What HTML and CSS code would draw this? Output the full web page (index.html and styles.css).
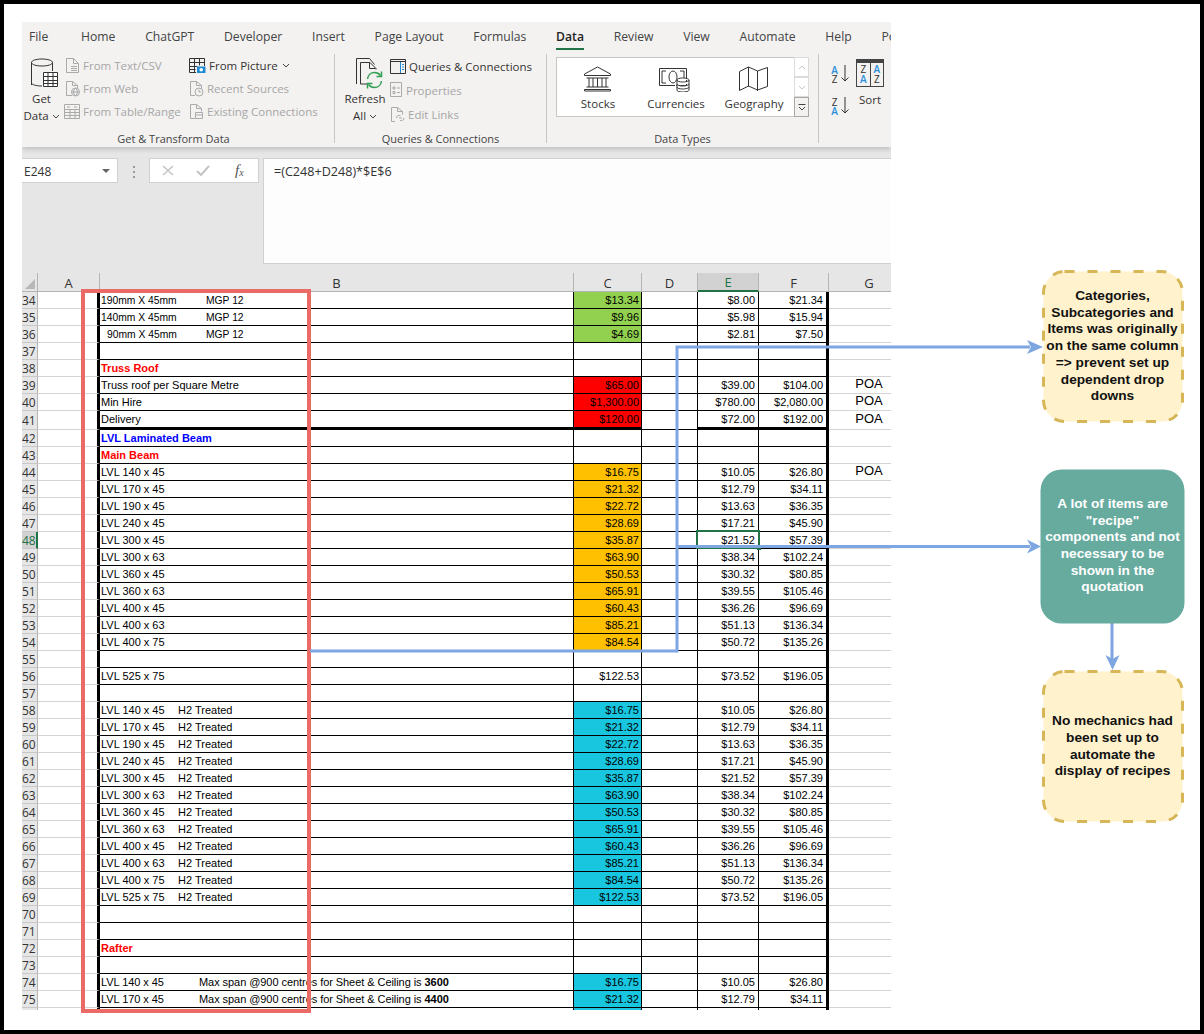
FILE: index.html
```html
<!DOCTYPE html>
<html>
<head>
    <title>Price list review</title>
    <link rel="stylesheet" href="styles.css">
</head>
<body>
<div class="frame">
<div class="excel">
    <div class="ribbon">
        <div class="tabs">
            <span>File</span><span>Home</span><span>ChatGPT</span><span>Developer</span><span>Insert</span><span>Page Layout</span><span>Formulas</span><span class="active">Data</span><span>Review</span><span>View</span><span>Automate</span><span>Help</span><span>Power Pivot</span>
        </div>
        <div class="groups">
            <!-- Get & Transform -->
            <div class="group g1">
                <div class="group-body">
                    <div class="big">
                        <svg width="30" height="32" viewBox="0 0 30 32" fill="none" stroke="#333" stroke-width="1"><path d="M1.5 28V5.5C1.5 3.5 6 2 12 2s10.500 1.500 10.500 3.500V14M1.500 5.500C1.500 7.500 6 9 12 9s10.500-1.500 10.500-3.500M1.500 26c0 1.500 4 3 10.500 3"/><path d="M13.500 15.500h14v14h-14zM13.500 19.500h14M13.500 23.500h14M13.500 26.500h14M18 15.500v14M23 15.500v14" fill="#fff"/></svg>
                        <span class="big-label">Get</span>
                        <span class="big-label">Data <svg class="chev" width="8" height="5" viewBox="0 0 8 5"><path d="M1 1l3 3 3-3" fill="none" stroke="#444"/></svg></span>
                    </div>
                    <div class="col col-a">
                        <div class="item off"><svg width="15" height="17" viewBox="0 0 15 17" fill="none" stroke="#aaa"><path d="M1.500 1.500h7l5 5v9h-12zM8.500 1.500v5h5M6 9.500h6M6 11.500h6M6 13.500h6"/></svg>From Text/CSV</div>
                        <div class="item off"><svg width="15" height="17" viewBox="0 0 15 17" fill="none" stroke="#aaa"><path d="M7 15.500H1.500v-14h6l5 4v3M7.500 1.500v4h5"/><circle cx="10.500" cy="12" r="4"/><path d="M6.500 12h8M10.500 8c-2.500 2.500-2.500 5.500 0 8M10.500 8c2.500 2.500 2.500 5.500 0 8"/></svg>From Web</div>
                        <div class="item off item-wide"><svg width="16" height="15" viewBox="0 0 16 15" fill="none" stroke="#aaa"><path d="M.5.500h15v14H.500zM.5 5.500h15M.5 8.500h15M.5 11.500h15M6 5.500v9M11 5.500v9M3 3h3M10 3h3"/></svg>From Table/Range</div>
                    </div>
                    <div class="col col-b">
                        <div class="item"><svg width="17" height="16" viewBox="0 0 17 16" fill="none" stroke="#333"><path d="M7 14.500H.5V.5h15V8M.5 4.500h15M.5 8.500h8M.5 11.500h6M5.500.5v14M10.500.5v7"/><rect x="8" y="8.500" width="8.500" height="6.500" fill="#1f8ad2" stroke="none"/><circle cx="12.200" cy="11.700" r="1.800" fill="#fff" stroke="none"/></svg>From Picture <svg class="chev" width="8" height="5" viewBox="0 0 8 5"><path d="M1 1l3 3 3-3" fill="none" stroke="#444"/></svg></div>
                        <div class="item off"><svg width="15" height="17" viewBox="0 0 15 17" fill="none" stroke="#aaa"><path d="M6 15.500H1.500v-14h6l5 4v3M7.500 1.500v4h5"/><circle cx="10" cy="12" r="4"/><path d="M10 9.500V12h2"/></svg>Recent Sources</div>
                        <div class="item off"><svg width="15" height="17" viewBox="0 0 15 17" fill="none" stroke="#aaa"><path d="M6 15.500H1.500v-14h6l5 4v3M7.500 1.500v4h5"/><path d="M6.500 9.500h7v6h-7zM6.500 12h7"/></svg>Existing Connections</div>
                    </div>
                </div>
                <div class="group-label shift">Get &amp; Transform Data</div>
            </div>
            <!-- Queries & Connections -->
            <div class="group g2">
                <div class="group-body">
                    <div class="big big-refresh">
                        <svg width="30" height="32" viewBox="0 0 30 32" fill="none"><path d="M3.500 27V1.500h13l5 6" stroke="#333"/><path d="M7.500 27V5.500h9.500l6 6v1M7.500 27H14M16.500 5.500v6h6" stroke="#333"/><path d="M14.500 22c.5-4 3.500-6.500 7-6.500 2.500 0 4.500 1 6 3M28.500 24c-.5 4-3.500 6.500-7 6.500-2.500 0-4.500-1-6-3" stroke="#2f9e52" stroke-width="1.500"/><path d="M28.500 14.500v5h-5M14.500 31.500v-5h5" stroke="#2f9e52" stroke-width="1.500"/></svg>
                        <span class="big-label">Refresh</span>
                        <span class="big-label">All <svg class="chev" width="8" height="5" viewBox="0 0 8 5"><path d="M1 1l3 3 3-3" fill="none" stroke="#444"/></svg></span>
                    </div>
                    <div class="col col-c">
                        <div class="item"><svg width="16" height="15" viewBox="0 0 16 15" fill="none" stroke="#333"><path d="M.5.500h15v14H.500zM.5 2.500h15"/><path d="M10.500 3v11" stroke="#1f8ad2"/><path d="M12 5.500h2M12 8h2M12 10.500h2" stroke="#1f8ad2"/></svg>Queries &amp; Connections</div>
                        <div class="item off"><svg width="13" height="16" viewBox="0 0 13 16" fill="none" stroke="#aaa"><path d="M.5.500h11v14H.500zM3 5h2v2H3zM3 9.500h2v2H3zM7 6h3M7 10.500h3"/></svg>Properties</div>
                        <div class="item off"><svg width="15" height="17" viewBox="0 0 15 17" fill="none" stroke="#aaa"><path d="M5 15.500H1.500v-14h6l5 4v3M7.500 1.500v4h5"/><path d="M6.500 12c0-1.500 1-2.500 2.500-2.500h1.500M14 12c0 1.500-1 2.500-2.500 2.500H10M9 12h3"/></svg>Edit Links</div>
                    </div>
                </div>
                <div class="group-label">Queries &amp; Connections</div>
            </div>
            <!-- Data Types -->
            <div class="group g3">
                <div class="group-body">
                    <div class="gallery">
                        <div class="gal-item">
                            <svg width="29" height="26" viewBox="0 0 29 26" fill="none" stroke="#333"><path d="M14.500 1L1.500 8v1.500h26V8zM3.500 12h22M3.500 21h22M6 12v9M10 12v9M14.500 12v9M19 12v9M23 12v9M1.500 23.500h26v1.500h-26z"/></svg>
                            <span>Stocks</span>
                        </div>
                        <div class="gal-item">
                            <svg width="32" height="26" viewBox="0 0 32 26" fill="none" stroke="#333"><path d="M.5 2.500h27v17H17M.5 2.500v17H16M3 8v9h4M7 5H3v3M25 14V5h-4"/><ellipse cx="14" cy="11" rx="4" ry="6"/><path d="M18 14c0-1.200 2.500-2 5.500-2s6.500.8 6.500 2v10c0 1.200-3 2-6.500 2S18 25.200 18 24zM18 14c0 1.200 2.500 2 5.500 2s6.500-.8 6.500-2M18 18c0 1.200 2.500 2 5.500 2s6.500-.8 6.500-2M18 21c0 1.200 2.500 2 5.500 2s6.500-.8 6.500-2" fill="#fff"/></svg>
                            <span>Currencies</span>
                        </div>
                        <div class="gal-item">
                            <svg width="29" height="25" viewBox="0 0 29 25" fill="none" stroke="#333"><path d="M.5 5L9.500.5l9 4 10-3.500v19l-10 3.500-9-4-9 4.500zM9.500.5v19.500M18.500 4.500v20"/></svg>
                            <span>Geography</span>
                        </div>
                    </div>
                    <div class="gal-scroll">
                        <div class="up"><svg width="8" height="5" viewBox="0 0 8 5"><path d="M1 4l3-3 3 3" fill="none" stroke="#c8c6c4"/></svg></div>
                        <div class="up"><svg width="8" height="5" viewBox="0 0 8 5"><path d="M1 1l3 3 3-3" fill="none" stroke="#c8c6c4"/></svg></div>
                        <div class="more"><svg width="8" height="8" viewBox="0 0 8 8"><path d="M.5 1.500h7M1 4l3 3 3-3" fill="none" stroke="#444"/></svg></div>
                    </div>
                </div>
                <div class="group-label">Data Types</div>
            </div>
            <!-- Sort -->
            <div class="group g4">
                <div class="group-body">
                    <div class="sort-small">
                        <div class="az"><span class="letters"><b>A</b><i>Z</i></span><svg width="8" height="17" viewBox="0 0 8 17"><path d="M4 0v16M.5 12.500L4 16l3.500-3.500" fill="none" stroke="#333"/></svg></div>
                        <div class="az"><span class="letters"><i>Z</i><b>A</b></span><svg width="8" height="17" viewBox="0 0 8 17"><path d="M4 0v16M.5 12.500L4 16l3.500-3.500" fill="none" stroke="#333"/></svg></div>
                    </div>
                    <div class="sort-big">
                        <div class="sort-box">
                            <div class="sort-cell"><i>Z</i><b>A</b></div>
                            <div class="sort-cell"><b>A</b><i>Z</i></div>
                        </div>
                        <span>Sort</span>
                    </div>
                </div>
            </div>
        </div>
    </div>

    <div class="formula-area">
        <div class="namebox">E248<span class="caret"></span></div>
        <div class="dots"><i></i><i></i><i></i></div>
        <div class="fx-box">
            <svg width="12" height="11" viewBox="0 0 12 11"><path d="M1 1l10 9M11 1L1 10" stroke="#c4c4c4" stroke-width="1.500"/></svg>
            <svg width="14" height="11" viewBox="0 0 14 11"><path d="M1 6l4 4 8-9" fill="none" stroke="#c4c4c4" stroke-width="2"/></svg>
            <span class="fx">f<sub>x</sub></span>
        </div>
        <div class="formula">=(C248+D248)*$E$6</div>
    </div>

    <div class="sheet">
        <table class="grid">
            <colgroup><col class="w-h"><col class="w-a"><col class="w-b"><col class="w-c"><col class="w-d"><col class="w-e"><col class="w-f"><col class="w-g"></colgroup>
            <thead>
                <tr><th class="corner"><span></span></th><th>A</th><th>B</th><th>C</th><th>D</th><th class="cur">E</th><th>F</th><th class="head-g">G</th></tr>
            </thead>
            <tbody>
                <tr><th>34</th><td class="a"></td><td class="b sm"><span class="k1">190mm X 45mm</span>MGP 12</td><td class="c green">$13.34</td><td></td><td class="n">$8.00</td><td class="f">$21.34</td><td class="g"></td></tr>
                <tr><th>35</th><td class="a"></td><td class="b sm"><span class="k1">140mm X 45mm</span>MGP 12</td><td class="c green">$9.96</td><td></td><td class="n">$5.98</td><td class="f">$15.94</td><td class="g"></td></tr>
                <tr><th>36</th><td class="a"></td><td class="b sm"><span class="k1 ind">90mm X 45mm</span>MGP 12</td><td class="c green">$4.69</td><td></td><td class="n">$2.81</td><td class="f">$7.50</td><td class="g"></td></tr>
                <tr><th>37</th><td class="a"></td><td class="b"></td><td class="c"></td><td></td><td class="n"></td><td class="f"></td><td class="g"></td></tr>
                <tr><th>38</th><td class="a"></td><td class="b hd-red">Truss Roof</td><td class="c"></td><td></td><td class="n"></td><td class="f"></td><td class="g"></td></tr>
                <tr><th>39</th><td class="a"></td><td class="b">Truss roof per Square Metre</td><td class="c red">$65.00</td><td></td><td class="n">$39.00</td><td class="f">$104.00</td><td class="g">POA</td></tr>
                <tr><th>40</th><td class="a"></td><td class="b">Min Hire</td><td class="c red">$1,300.00</td><td></td><td class="n">$780.00</td><td class="f">$2,080.00</td><td class="g">POA</td></tr>
                <tr class="thick"><th>41</th><td class="a"></td><td class="b">Delivery</td><td class="c red">$120.00</td><td class="d"></td><td class="n">$72.00</td><td class="f">$192.00</td><td class="g">POA</td></tr>
                <tr><th>42</th><td class="a"></td><td class="b hd-blue">LVL Laminated Beam</td><td class="c"></td><td></td><td class="n"></td><td class="f"></td><td class="g"></td></tr>
                <tr><th>43</th><td class="a"></td><td class="b hd-red">Main Beam</td><td class="c"></td><td></td><td class="n"></td><td class="f"></td><td class="g"></td></tr>
                <tr><th>44</th><td class="a"></td><td class="b">LVL 140 x 45</td><td class="c orange">$16.75</td><td></td><td class="n">$10.05</td><td class="f">$26.80</td><td class="g">POA</td></tr>
                <tr><th>45</th><td class="a"></td><td class="b">LVL 170 x 45</td><td class="c orange">$21.32</td><td></td><td class="n">$12.79</td><td class="f">$34.11</td><td class="g"></td></tr>
                <tr><th>46</th><td class="a"></td><td class="b">LVL 190 x 45</td><td class="c orange">$22.72</td><td></td><td class="n">$13.63</td><td class="f">$36.35</td><td class="g"></td></tr>
                <tr><th>47</th><td class="a"></td><td class="b">LVL 240 x 45</td><td class="c orange">$28.69</td><td></td><td class="n">$17.21</td><td class="f">$45.90</td><td class="g"></td></tr>
                <tr><th class="cur-row">48</th><td class="a"></td><td class="b">LVL 300 x 45</td><td class="c orange">$35.87</td><td></td><td class="n sel">$21.52</td><td class="f">$57.39</td><td class="g"></td></tr>
                <tr><th>49</th><td class="a"></td><td class="b">LVL 300 x 63</td><td class="c orange">$63.90</td><td></td><td class="n">$38.34</td><td class="f">$102.24</td><td class="g"></td></tr>
                <tr><th>50</th><td class="a"></td><td class="b">LVL 360 x 45</td><td class="c orange">$50.53</td><td></td><td class="n">$30.32</td><td class="f">$80.85</td><td class="g"></td></tr>
                <tr><th>51</th><td class="a"></td><td class="b">LVL 360 x 63</td><td class="c orange">$65.91</td><td></td><td class="n">$39.55</td><td class="f">$105.46</td><td class="g"></td></tr>
                <tr><th>52</th><td class="a"></td><td class="b">LVL 400 x 45</td><td class="c orange">$60.43</td><td></td><td class="n">$36.26</td><td class="f">$96.69</td><td class="g"></td></tr>
                <tr><th>53</th><td class="a"></td><td class="b">LVL 400 x 63</td><td class="c orange">$85.21</td><td></td><td class="n">$51.13</td><td class="f">$136.34</td><td class="g"></td></tr>
                <tr><th>54</th><td class="a"></td><td class="b">LVL 400 x 75</td><td class="c orange">$84.54</td><td></td><td class="n">$50.72</td><td class="f">$135.26</td><td class="g"></td></tr>
                <tr><th>55</th><td class="a"></td><td class="b"></td><td class="c"></td><td></td><td class="n"></td><td class="f"></td><td class="g"></td></tr>
                <tr><th>56</th><td class="a"></td><td class="b">LVL 525 x 75</td><td class="c">$122.53</td><td></td><td class="n">$73.52</td><td class="f">$196.05</td><td class="g"></td></tr>
                <tr><th>57</th><td class="a"></td><td class="b"></td><td class="c"></td><td></td><td class="n"></td><td class="f"></td><td class="g"></td></tr>
                <tr><th>58</th><td class="a"></td><td class="b"><span class="k2">LVL 140 x 45</span>H2 Treated</td><td class="c teal">$16.75</td><td></td><td class="n">$10.05</td><td class="f">$26.80</td><td class="g"></td></tr>
                <tr><th>59</th><td class="a"></td><td class="b"><span class="k2">LVL 170 x 45</span>H2 Treated</td><td class="c teal">$21.32</td><td></td><td class="n">$12.79</td><td class="f">$34.11</td><td class="g"></td></tr>
                <tr><th>60</th><td class="a"></td><td class="b"><span class="k2">LVL 190 x 45</span>H2 Treated</td><td class="c teal">$22.72</td><td></td><td class="n">$13.63</td><td class="f">$36.35</td><td class="g"></td></tr>
                <tr><th>61</th><td class="a"></td><td class="b"><span class="k2">LVL 240 x 45</span>H2 Treated</td><td class="c teal">$28.69</td><td></td><td class="n">$17.21</td><td class="f">$45.90</td><td class="g"></td></tr>
                <tr><th>62</th><td class="a"></td><td class="b"><span class="k2">LVL 300 x 45</span>H2 Treated</td><td class="c teal">$35.87</td><td></td><td class="n">$21.52</td><td class="f">$57.39</td><td class="g"></td></tr>
                <tr><th>63</th><td class="a"></td><td class="b"><span class="k2">LVL 300 x 63</span>H2 Treated</td><td class="c teal">$63.90</td><td></td><td class="n">$38.34</td><td class="f">$102.24</td><td class="g"></td></tr>
                <tr><th>64</th><td class="a"></td><td class="b"><span class="k2">LVL 360 x 45</span>H2 Treated</td><td class="c teal">$50.53</td><td></td><td class="n">$30.32</td><td class="f">$80.85</td><td class="g"></td></tr>
                <tr><th>65</th><td class="a"></td><td class="b"><span class="k2">LVL 360 x 63</span>H2 Treated</td><td class="c teal">$65.91</td><td></td><td class="n">$39.55</td><td class="f">$105.46</td><td class="g"></td></tr>
                <tr><th>66</th><td class="a"></td><td class="b"><span class="k2">LVL 400 x 45</span>H2 Treated</td><td class="c teal">$60.43</td><td></td><td class="n">$36.26</td><td class="f">$96.69</td><td class="g"></td></tr>
                <tr><th>67</th><td class="a"></td><td class="b"><span class="k2">LVL 400 x 63</span>H2 Treated</td><td class="c teal">$85.21</td><td></td><td class="n">$51.13</td><td class="f">$136.34</td><td class="g"></td></tr>
                <tr><th>68</th><td class="a"></td><td class="b"><span class="k2">LVL 400 x 75</span>H2 Treated</td><td class="c teal">$84.54</td><td></td><td class="n">$50.72</td><td class="f">$135.26</td><td class="g"></td></tr>
                <tr><th>69</th><td class="a"></td><td class="b"><span class="k2">LVL 525 x 75</span>H2 Treated</td><td class="c teal">$122.53</td><td></td><td class="n">$73.52</td><td class="f">$196.05</td><td class="g"></td></tr>
                <tr><th>70</th><td class="a"></td><td class="b"></td><td class="c"></td><td></td><td class="n"></td><td class="f"></td><td class="g"></td></tr>
                <tr><th>71</th><td class="a"></td><td class="b"></td><td class="c"></td><td></td><td class="n"></td><td class="f"></td><td class="g"></td></tr>
                <tr><th>72</th><td class="a"></td><td class="b hd-red">Rafter</td><td class="c"></td><td></td><td class="n"></td><td class="f"></td><td class="g"></td></tr>
                <tr><th>73</th><td class="a"></td><td class="b"></td><td class="c"></td><td></td><td class="n"></td><td class="f"></td><td class="g"></td></tr>
                <tr><th>74</th><td class="a"></td><td class="b long"><span class="k3">LVL 140 x 45</span>Max span @900 centres for Sheet &amp; Ceiling is <b>3600</b></td><td class="c teal">$16.75</td><td></td><td class="n">$10.05</td><td class="f">$26.80</td><td class="g"></td></tr>
                <tr><th>75</th><td class="a"></td><td class="b long"><span class="k3">LVL 170 x 45</span>Max span @900 centres for Sheet &amp; Ceiling is <b>4400</b></td><td class="c teal">$21.32</td><td></td><td class="n">$12.79</td><td class="f">$34.11</td><td class="g"></td></tr>
                <tr><th>76</th><td class="a"></td><td class="b"></td><td class="c teal"></td><td></td><td class="n"></td><td class="f"></td><td class="g"></td></tr>
            </tbody>
        </table>
    </div>
</div>
</div>

<!-- annotations drawn on top of the screenshot -->
<svg class="annot" width="1204" height="1034" viewBox="0 0 1204 1034" fill="none">
    <rect x="83" y="291" width="226" height="720" stroke="#ea6b66" stroke-width="4"/>
    <path d="M310 651H677V347H1030M677 546.500H1030M1112 623V660" stroke="#7ea6e0" stroke-width="3"/>
    <path d="M1043 347l-16-7 4 7-4 7zM1041 546.500l-14-7 4 7-4 7zM1112.500 670l-7-15 7 4 7-4z" fill="#7ea6e0"/>
    <rect x="1043.500" y="271.500" width="139" height="150" rx="21" fill="#fff2cc" stroke="#d6b656" stroke-width="3" stroke-dasharray="10 13"/>
    <rect x="1040.500" y="469.500" width="144" height="154" rx="21" fill="#67ab9f"/>
    <rect x="1043.500" y="671.500" width="139" height="150" rx="21" fill="#fff2cc" stroke="#d6b656" stroke-width="3" stroke-dasharray="10 13"/>
</svg>
<div class="note note-1">Categories,<br>Subcategories and<br>Items was originally<br>on the same column<br>=&gt; prevent set up<br>dependent drop<br>downs</div>
<div class="note note-2">A lot of items are<br>"recipe"<br>components and not<br>necessary to be<br>shown in the<br>quotation</div>
<div class="note note-3">No mechanics had<br>been set up to<br>automate the<br>display of recipes</div>
</body>
</html>
```

FILE: styles.css
```css
html, body {
    margin: 0;
    padding: 0;
}
body {
    position: relative;
    width: 1204px;
    height: 1034px;
    overflow: hidden;
    background: #fff;
    font-family: "Open Sans", "Liberation Sans", sans-serif;
}
.frame {
    box-sizing: border-box;
    width: 1204px;
    height: 1034px;
    border: 4px solid #000;
    padding: 18px 0 0 18px;
}
.excel {
    width: 869px;
    height: 988px;
    overflow: hidden;
    background: #e6e6e6;
}

/* ribbon */
.ribbon {
    height: 125px;
    background: #f3f2f1;
    box-shadow: 0 2px 5px rgba(0,0,0,0.18);
    position: relative;
    color: #333;
    font-size: 11.5px;
}
.tabs {
    display: flex;
    gap: 29.7px;
    height: 32px;
    padding-left: 7px;
    white-space: nowrap;
    overflow: hidden;
    font-size: 12.2px;
    line-height: 29px;
    color: #444;
}
.tabs span:first-child {
    margin-right: 3px;
}
.tabs .active {
    font-weight: 600;
    color: #222;
    height: 26px;
    border-bottom: 2px solid #217346;
}
.groups {
    display: flex;
    height: 89px;
}
.group {
    display: flex;
    flex-direction: column;
    box-sizing: border-box;
    border-right: 1px solid #c8c6c4;
}
.group-body {
    display: flex;
    flex: none;
    height: 77px;
}
.group-label {
    flex: none;
    text-align: center;
    line-height: 16px;
    font-size: 11px;
    color: #444;
}
.shift {
    padding-right: 9px;
}
.g1 { width: 313px; }
.g2 { width: 212px; }
.g3 { width: 272px; }
.g4 { width: 72px; border-right: none; }

.big {
    display: flex;
    flex-direction: column;
    align-items: center;
    width: 39px;
    padding-top: 3px;
}
.big > svg {
    margin-left: 6px;
    margin-bottom: 1px;
}
.big-label {
    line-height: 17px;
    white-space: nowrap;
}
.big-refresh {
    margin-left: 9px;
    width: 42px;
}
.chev {
    vertical-align: 1px;
}
.col {
    display: flex;
    flex-direction: column;
    white-space: nowrap;
}
.col-a { width: 124px; margin-left: 4px; }
.col-b { width: 140px; }
.col-c { margin-left: 4px; }
.item {
    display: flex;
    align-items: center;
    gap: 3px;
    height: 23px;
}
.col-c .item {
    height: 24px;
}
.item svg:first-child {
    flex: none;
}
.item .chev {
    margin-left: 1px;
}
.off {
    color: #a6a6a6;
}
.item-wide svg {
    margin-left: -1px;
}

/* data types */
.gallery {
    display: flex;
    box-sizing: border-box;
    width: 238px;
    height: 60px;
    margin: 3px 0 0 9px;
    background: #fff;
    border: 1px solid #c8c6c4;
    border-right: none;
}
.gal-item {
    width: 78px;
    display: flex;
    flex-direction: column;
    align-items: center;
    padding-top: 8px;
    box-sizing: border-box;
}
.gal-item:first-child {
    margin-left: 2px;
}
.gal-item svg {
    height: 26px;
    margin: 0 2px 4px 0;
}
.gal-scroll {
    display: flex;
    flex-direction: column;
    width: 15px;
    height: 60px;
    margin-top: 3px;
}
.gal-scroll div {
    flex: 1;
    display: flex;
    align-items: center;
    justify-content: center;
    box-sizing: border-box;
    border: 1px solid #dcdbd9;
    background: #fff;
}
.gal-scroll .more {
    border-color: #a8a8a8;
    background: #f3f2f1;
}

/* sort */
.sort-small {
    display: flex;
    flex-direction: column;
    gap: 14px;
    margin: 11px 0 0 11px;
}
.az {
    display: flex;
    align-items: flex-start;
    gap: 2px;
    height: 18px;
}
.letters {
    display: flex;
    flex-direction: column;
    width: 9px;
    font-size: 10px;
    line-height: 9px;
    text-align: center;
    padding-top: 1px;
}
.letters b, .sort-cell b {
    color: #2b8fd9;
    font-weight: 600;
    font-style: normal;
}
.letters i, .sort-cell i {
    color: #333;
    font-style: normal;
}
.sort-big {
    display: flex;
    flex-direction: column;
    align-items: center;
    margin: 5px 0 0 7px;
}
.sort-box {
    display: flex;
    box-sizing: border-box;
    width: 28px;
    height: 28px;
    border: 1px solid #444;
    border-top-width: 4px;
    margin-bottom: 5px;
}
.sort-cell {
    flex: 1;
    display: flex;
    flex-direction: column;
    font-size: 10px;
    line-height: 10px;
    text-align: center;
    padding-top: 1px;
}
.sort-cell + .sort-cell {
    border-left: 1px solid #444;
}

/* formula bar */
.formula-area {
    display: flex;
    align-items: flex-start;
    height: 126px;
    padding-top: 11px;
    box-sizing: border-box;
    font-size: 12px;
    color: #333;
}
.namebox {
    display: flex;
    align-items: center;
    justify-content: space-between;
    box-sizing: border-box;
    width: 96px;
    height: 25px;
    padding: 1px 7px 0 2px;
    background: #fff;
    border: 1px solid #d0d0d0;
    border-left: none;
}
.caret {
    width: 0;
    height: 0;
    border: 4px solid transparent;
    border-top: 4px solid #666;
    border-bottom: none;
}
.dots {
    display: flex;
    flex-direction: column;
    gap: 3px;
    width: 31px;
    padding-top: 8px;
    align-items: center;
}
.dots i {
    width: 2px;
    height: 2px;
    background: #999;
}
.fx-box {
    display: flex;
    align-items: center;
    gap: 22px;
    box-sizing: border-box;
    width: 110px;
    height: 25px;
    padding-left: 12px;
    background: #fff;
    border: 1px solid #d0d0d0;
}
.fx {
    font-family: "Liberation Serif", serif;
    font-style: italic;
    font-size: 15px;
    color: #555;
    margin-left: 3px;
}
.fx sub {
    font-size: 10px;
    vertical-align: -1px;
}
.formula {
    box-sizing: border-box;
    flex: 1;
    height: 106px;
    margin-left: 4px;
    padding: 4px 0 0 10px;
    background: #fdfdfd;
    border: 1px solid #d0d0d0;
    border-width: 1px 0 1px 1px;
    font-size: 12.6px;
}

/* sheet */
.sheet {
    height: 737px;
    overflow: hidden;
    background: #fff;
}
.grid {
    table-layout: fixed;
    width: 869px;
    border-collapse: separate;
    border-spacing: 0;
    font-family: "Liberation Sans", Arial, sans-serif;
    font-size: 11px;
    color: #000;
}
.w-h { width: 16px; }
.w-a { width: 62px; }
.w-b { width: 474px; }
.w-c { width: 68px; }
.w-d { width: 56px; }
.w-e { width: 61px; }
.w-f { width: 70px; }
.w-g { width: 62px; }
.grid thead th {
    box-sizing: border-box;
    height: 18px;
    padding: 1px 0 0;
    background: #e6e6e6;
    border-right: 1px solid #b4b4b4;
    border-bottom: 1px solid #b4b4b4;
    font-family: "Open Sans", sans-serif;
    font-weight: 400;
    font-size: 13px;
    color: #333;
    line-height: 16px;
}
.grid thead th:last-child {
    border-right: none;
}
.grid thead .head-g {
    padding-left: 18px;
}
.grid thead .cur {
    background: #d2d2d2;
    color: #217346;
    border-bottom: 2px solid #217346;
}
.corner {
    position: relative;
}
.corner span {
    position: absolute;
    right: 2px;
    bottom: 2px;
    width: 0;
    height: 0;
    border-left: 10px solid transparent;
    border-bottom: 10px solid #b8b8b8;
}
.grid tbody th {
    box-sizing: border-box;
    height: 17px;
    padding: 1px 2px 0 0;
    text-align: right;
    background: #e6e6e6;
    border-right: 1px solid #b4b4b4;
    border-bottom: 1px solid #c8c8c8;
    font-family: "Open Sans", sans-serif;
    font-weight: 400;
    font-size: 12px;
    line-height: 15px;
    color: #333;
}
.grid tbody .cur-row {
    background: #d2d2d2;
    color: #217346;
    border-right: 2px solid #217346;
}
.grid td {
    box-sizing: border-box;
    height: 17px;
    padding: 1px 0 0;
    border-right: 1px solid #000;
    border-bottom: 1px solid #000;
    white-space: nowrap;
    overflow: hidden;
    line-height: 15px;
}
.grid td.a {
    border-right: 3px solid #000;
    border-bottom: 1px solid #d4d4d4;
}
.grid td.b {
    padding-left: 1px;
    overflow: visible;
}
.grid td.c, .grid td.n, .grid td.f {
    text-align: right;
    padding-right: 2px;
}
.grid td.n {
    padding-right: 3px;
}
.grid td.f {
    border-right: 3px solid #000;
    padding-right: 3px;
}
.grid td.g {
    border-right: none;
    border-bottom: 1px solid #d4d4d4;
    text-align: center;
    padding: 0 0 2px 18px;
    font-size: 13px;
    line-height: 14px;
}
.thick td {
    height: 19px;
    border-bottom: 3px solid #000;
}
.grid .thick th {
    height: 19px;
}
.grid .thick td.d {
    border-bottom: 1px solid #000;
}
.green { background: #92d050; }
.red { background: #ff0000; }
.orange { background: #ffc000; }
.teal { background: #18c6df; }
.hd-red {
    color: #ff0000;
    font-weight: 700;
}
.hd-blue {
    color: #0000ff;
    font-weight: 700;
}
.sm {
    font-size: 10.3px;
}
.long {
    letter-spacing: -0.06px;
}
.k1, .k2, .k3 {
    display: inline-block;
}
.k1 { width: 105px; }
.k2 { width: 77px; }
.k3 { width: 98px; }
.ind { padding-left: 6px; width: 99px; }
.grid td.sel {
    position: relative;
    overflow: visible;
}
.sel::after {
    content: "";
    position: absolute;
    left: -2px;
    top: -2px;
    right: -2px;
    bottom: -1px;
    border: 2px solid #217346;
}
.sel::before {
    content: "";
    position: absolute;
    right: -3px;
    bottom: -2px;
    width: 4px;
    height: 4px;
    background: #217346;
}

/* callouts */
.annot {
    position: absolute;
    left: 0;
    top: 0;
}
.note {
    position: absolute;
    left: 1041px;
    width: 143px;
    display: flex;
    align-items: center;
    justify-content: center;
    text-align: center;
    white-space: nowrap;
    font-family: "Liberation Sans", Arial, sans-serif;
    font-weight: 700;
    font-size: 13.7px;
    line-height: 16.7px;
    color: #111;
}
.note-1 { top: 271px; height: 151px; }
.note-2 { top: 469px; height: 154px; color: #fff; }
.note-3 { top: 671px; height: 151px; }
```
